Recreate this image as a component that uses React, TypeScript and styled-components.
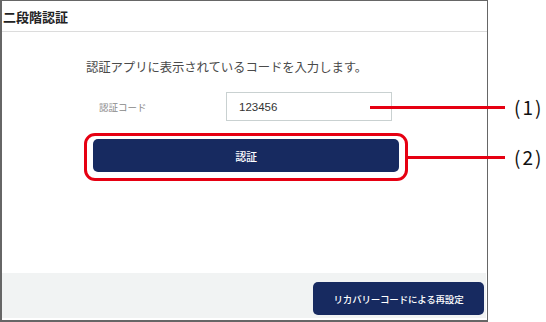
import React from "react";
import styled, { createGlobalStyle } from "styled-components";

const GlobalStyle = createGlobalStyle`
  html, body {
    margin: 0;
    padding: 0;
    background: #ffffff;
  }
  body {
    font-family: "Noto Sans CJK JP", "Liberation Sans", sans-serif;
    color: #333;
  }
`;

const Page = styled.div`
  position: relative;
  width: 546px;
  height: 322px;
  overflow: hidden;
`;

const Frame = styled.div`
  box-sizing: border-box;
  width: 488px;
  height: 322px;
  border: 1px solid #666;
  border-left-width: 2px;
  border-bottom-width: 2px;
  display: flex;
  flex-direction: column;
`;

const Header = styled.div`
  height: 30px;
  border-bottom: 1px solid #dcdcdc;
  display: flex;
  align-items: center;
  padding-left: 1px;
  font-size: 13px;
  font-weight: 700;
  color: #222;
`;

const Body = styled.div`
  flex: 1;
  display: flex;
  flex-direction: column;
  padding-top: 26px;
`;

const Prompt = styled.p`
  margin: 0 0 0 84px;
  font-size: 12.4px;
  line-height: 18px;
  letter-spacing: -0.1px;
  color: #4a4a4a;
`;

const Row = styled.div`
  display: flex;
  align-items: center;
  margin-top: 16px;
`;

const FieldLabel = styled.label`
  width: 127px;
  padding-left: 97px;
  font-size: 9.5px;
  color: #888;
`;

const Input = styled.input`
  box-sizing: border-box;
  width: 166px;
  height: 29px;
  border: 1px solid #c9d1d1;
  padding: 0 12px;
  font-family: "Liberation Sans", Arial, sans-serif;
  font-size: 11.5px;
  color: #333;
  outline: none;
`;

const Highlight = styled.div`
  align-self: flex-start;
  margin: 12px 0 0 82px;
  border: 3px solid #e60012;
  border-radius: 11px;
  padding: 3px 6px 6px;
`;

const NavyButton = styled.button<{ $w: number; $h: number; $size: number }>`
  box-sizing: border-box;
  width: ${(p) => p.$w}px;
  height: ${(p) => p.$h}px;
  border: none;
  border-radius: 5px;
  background: #172a60;
  color: #fff;
  font-family: "Noto Sans CJK JP", sans-serif;
  font-size: ${(p) => p.$size}px;
  font-weight: 500;
  letter-spacing: -0.2px;
  cursor: pointer;
`;

const Footer = styled.div`
  height: 45px;
  margin: 0 1px 2px 0;
  background: #f1f3f3;
  display: flex;
  justify-content: flex-end;
  align-items: flex-end;
  padding: 0 2px 3px 0;
  box-sizing: border-box;
`;

const CalloutLine = styled.div<{ $left: number; $top: number }>`
  position: absolute;
  left: ${(p) => p.$left}px;
  right: 41px;
  top: ${(p) => p.$top}px;
  height: 2.5px;
  background: #e60012;
`;

const CalloutLabel = styled.span<{ $top: number }>`
  position: absolute;
  left: 514px;
  top: ${(p) => p.$top}px;
  font-family: "Noto Sans CJK JP", sans-serif;
  font-size: 19px;
  line-height: 24px;
  letter-spacing: 2px;
  color: #111;
`;

export default function App() {
  return (
    <Page>
      <GlobalStyle />
      <Frame>
        <Header>二段階認証</Header>
        <Body>
          <Prompt>認証アプリに表示されているコードを入力します。</Prompt>
          <Row>
            <FieldLabel>認証コード</FieldLabel>
            <Input defaultValue="123456" />
          </Row>
          <Highlight>
            <NavyButton $w={306} $h={33} $size={11}>
              認証
            </NavyButton>
          </Highlight>
        </Body>
        <Footer>
          <NavyButton $w={171} $h={33} $size={9.5}>
            リカバリーコードによる再設定
          </NavyButton>
        </Footer>
      </Frame>
      <CalloutLine $left={370} $top={106} />
      <CalloutLabel $top={95}>(1)</CalloutLabel>
      <CalloutLine $left={408} $top={156} />
      <CalloutLabel $top={145}>(2)</CalloutLabel>
    </Page>
  );
}
